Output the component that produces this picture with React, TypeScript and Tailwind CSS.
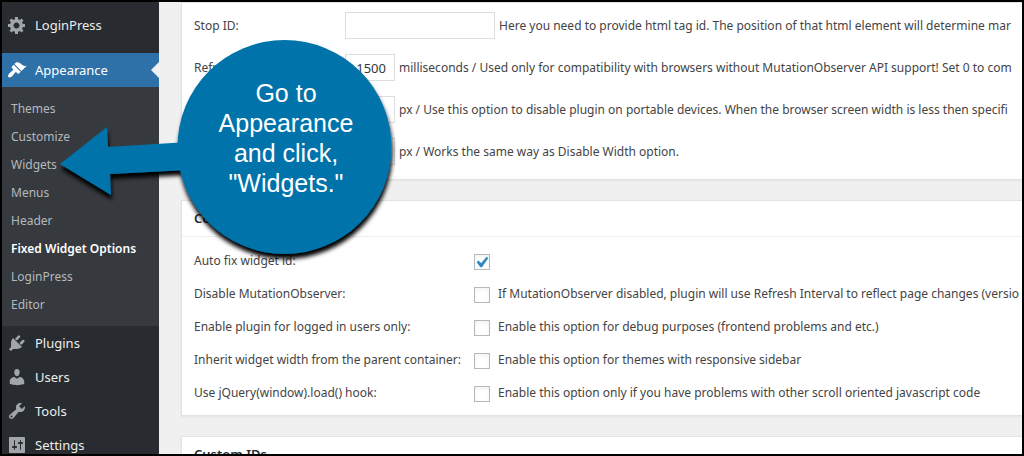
import React, { useState } from 'react';

interface MenuEntry {
  label: string;
  icon: string;
}

interface NumberSetting {
  id: string;
  label: string;
  value: string;
  wide?: boolean;
  hint: string;
}

interface ToggleSetting {
  id: string;
  label: string;
  checked: boolean;
  hint?: string;
}

const GEAR =
  'M18 12h-2.18c-.17.7-.44 1.35-.81 1.93l1.54 1.54-2.1 2.1-1.54-1.54c-.58.36-1.23.63-1.91.79V19H8v-2.18c-.68-.16-1.33-.43-1.91-.79l-1.54 1.54-2.12-2.12 1.54-1.54c-.36-.58-.63-1.23-.79-1.91H1V9.03h2.17c.16-.7.44-1.35.8-1.94L2.43 5.55l2.1-2.1 1.54 1.54c.58-.37 1.24-.64 1.93-.81V2h3v2.18c.68.16 1.33.43 1.91.79l1.54-1.54 2.12 2.12-1.54 1.54c.36.59.64 1.24.8 1.94H18V12zm-8.5 1.5c1.66 0 3-1.34 3-3s-1.34-3-3-3-3 1.34-3 3 1.34 3 3 3z';
const BRUSH =
  'M14.48 11.06L7.41 3.99l1.5-1.5c.5-.56 2.3-.47 3.51.32 1.21.8 1.43 1.28 2.91 2.1 1.18.64 2.45 1.26 4.45.85zm-.71.71L6.7 4.7 4.93 6.47c-.39.39-.39 1.02 0 1.41l1.06 1.06c.39.39.39 1.03 0 1.42-.6.6-1.43 1.11-2.21 1.69-.35.26-.7.53-1.01.84C1.43 14.23.4 16.08 1.4 17.07c.99 1 2.84-.03 4.18-1.36.31-.31.58-.66.85-1.02.57-.78 1.08-1.61 1.69-2.21.39-.39 1.02-.39 1.41 0l1.06 1.06c.39.39 1.02.39 1.41 0z';
const PLUG =
  'M13.11 4.36L9.87 7.6 8 5.73l3.24-3.24c.35-.34 1.05-.2 1.56.32.52.51.66 1.21.31 1.55zm-8 1.77l.91-1.12 9.01 9.01-1.19.84c-.71.71-2.63 1.16-3.82 1.16H6.14L4.9 17.26c-.59.59-1.54.59-2.12 0-.59-.58-.59-1.53 0-2.12l1.24-1.24v-3.88c0-1.13.4-3.19 1.09-3.89zm7.26 3.97l3.24-3.24c.34-.35 1.04-.21 1.55.31.52.51.66 1.21.31 1.55l-3.24 3.25z';
const USER =
  'M10 9.25c-2.27 0-2.73-3.44-2.73-3.44C7 4.02 7.82 2 9.97 2c2.16 0 2.98 2.02 2.71 3.81 0 0-.41 3.44-2.68 3.44zm0 2.57L12.72 10c2.39 0 4.52 2.33 4.52 4.53v2.49s-3.65 1.13-7.24 1.13c-3.65 0-7.24-1.13-7.24-1.13v-2.49c0-2.25 1.94-4.48 4.47-4.48z';
const WRENCH =
  'M16.68 9.77c-1.34 1.34-3.3 1.67-4.95.99l-5.41 6.52c-.99.99-2.59.99-3.58 0s-.99-2.59 0-3.57l6.52-5.42c-.68-1.65-.35-3.61.99-4.95 1.28-1.28 3.12-1.62 4.72-1.06l-2.89 2.89 2.82 2.82 2.86-2.87c.53 1.58.18 3.39-1.08 4.65zM3.81 16.21c.4.39 1.04.39 1.43 0 .4-.4.4-1.04 0-1.43-.39-.4-1.03-.4-1.43 0-.39.39-.39 1.03 0 1.43z';
const SLIDERS =
  'M18 17V3c0-.55-.45-1-1-1H3c-.55 0-1 .45-1 1v14c0 .55.45 1 1 1h14c.55 0 1-.45 1-1zM8 11h1c.55 0 1 .45 1 1s-.45 1-1 1H8v1.5c0 .28-.22.5-.5.5s-.5-.22-.5-.5V13H6c-.55 0-1-.45-1-1s.45-1 1-1h1V5.5c0-.28.22-.5.5-.5s.5.22.5.5V11zm5-2h-1c-.55 0-1-.45-1-1s.45-1 1-1h1V5.5c0-.28.22-.5.5-.5s.5.22.5.5V7h1c.55 0 1 .45 1 1s-.45 1-1 1h-1v5.5c0 .28-.22.5-.5.5s-.5-.22-.5-.5V9z';
const CHECK = 'M14.83 4.89l1.34.94-5.81 8.38H9.02L5.78 9.67l1.34-1.25 2.57 2.4z';

const submenu = ['Themes', 'Customize', 'Widgets', 'Menus', 'Header', 'Fixed Widget Options', 'LoginPress', 'Editor'];

const lowerMenu: MenuEntry[] = [
  { label: 'Plugins', icon: PLUG },
  { label: 'Users', icon: USER },
  { label: 'Tools', icon: WRENCH },
  { label: 'Settings', icon: SLIDERS },
];

const MenuLink: React.FC<MenuEntry & { current?: boolean }> = ({ label, icon, current }) => (
  <a
    href="#"
    className={
      current
        ? 'relative flex h-[34px] items-center gap-2 bg-[#2e70a8] pl-[5px] text-[13px] text-white'
        : 'flex h-[34px] items-center gap-2 pl-[5px] text-[13px] text-[#eeeeee]'
    }
  >
    <svg viewBox="0 0 20 20" className={current ? 'size-5 fill-white' : 'size-5 fill-[#a0a5aa]'}>
      <path d={icon} />
    </svg>
    <span className="pt-px">{label}</span>
    {current && (
      <span className="absolute right-0 border-y-8 border-r-8 border-y-transparent border-r-[#f0f0f0]" />
    )}
  </a>
);

const Sidebar: React.FC = () => (
  <nav className="w-[157px] shrink-0 bg-[#282b30] pt-[6px]">
    <MenuLink label="LoginPress" icon={GEAR} />
    <div className="mt-[11px]">
      <MenuLink label="Appearance" icon={BRUSH} current />
      <ul className="bg-[#363a3f] pt-2 pb-[7px]">
        {submenu.map(item => (
          <li key={item}>
            <a
              href="#"
              className={
                item === 'Fixed Widget Options'
                  ? 'block pl-[9px] text-xs leading-7 font-semibold whitespace-nowrap text-white'
                  : 'block pl-[9px] text-xs leading-7 whitespace-nowrap text-[#b4b9be]'
              }
            >
              {item}
            </a>
          </li>
        ))}
      </ul>
    </div>
    {lowerMenu.map(item => (
      <MenuLink key={item.label} {...item} />
    ))}
  </nav>
);

const Panel: React.FC<{ title?: string; children?: React.ReactNode }> = ({ title, children }) => (
  <section className="border border-r-0 border-[#e2e2e2] bg-white shadow-xs">
    {title && (
      <h2 className="border-b border-[#eeeeee] px-3 text-[13px] leading-[35px] font-semibold text-[#23282d]">{title}</h2>
    )}
    {children}
  </section>
);

const Callout: React.FC = () => (
  <div className="pointer-events-none absolute top-[38px] left-[56px] w-[336px]">
    <svg viewBox="0 0 336 222" className="w-full overflow-visible">
      <defs>
        <filter id="callout-shadow" x="-10%" y="-10%" width="125%" height="125%">
          <feDropShadow dx="1" dy="5" stdDeviation="2" floodColor="#000000" floodOpacity="1" />
        </filter>
      </defs>
      <g fill="#0073aa" filter="url(#callout-shadow)">
        <path d="M2 124L49 87L50 107L130 102V130L52 134L53 155Z" />
        <circle cx="226.5" cy="107" r="107" />
      </g>
    </svg>
    <p className="absolute top-[38px] right-0 w-[216px] text-center font-['Liberation_Sans',Arial,sans-serif] text-[25px] leading-[30px] text-white">
      Go to
      <br />
      Appearance
      <br />
      and click,
      <br />
      "Widgets."
    </p>
  </div>
);

const App: React.FC = () => {
  const [numbers, setNumbers] = useState<NumberSetting[]>([
    {
      id: 'stop-id',
      label: 'Stop ID:',
      value: '',
      wide: true,
      hint: 'Here you need to provide html tag id. The position of that html element will determine mar',
    },
    {
      id: 'refresh-interval',
      label: 'Refresh interval:',
      value: '1500',
      hint: 'milliseconds / Used only for compatibility with browsers without MutationObserver API support! Set 0 to com',
    },
    {
      id: 'disable-width',
      label: 'Disable Width:',
      value: '',
      hint: 'px / Use this option to disable plugin on portable devices. When the browser screen width is less then specifi',
    },
    { id: 'disable-height', label: 'Disable Height:', value: '', hint: 'px / Works the same way as Disable Width option.' },
  ]);

  const [toggles, setToggles] = useState<ToggleSetting[]>([
    { id: 'auto-fix', label: 'Auto fix widget id:', checked: true },
    {
      id: 'disable-mo',
      label: 'Disable MutationObserver:',
      checked: false,
      hint: 'If MutationObserver disabled, plugin will use Refresh Interval to reflect page changes (versio',
    },
    {
      id: 'logged-in',
      label: 'Enable plugin for logged in users only:',
      checked: false,
      hint: 'Enable this option for debug purposes (frontend problems and etc.)',
    },
    {
      id: 'inherit-width',
      label: 'Inherit widget width from the parent container:',
      checked: false,
      hint: 'Enable this option for themes with responsive sidebar',
    },
    {
      id: 'window-load',
      label: 'Use jQuery(window).load() hook:',
      checked: false,
      hint: 'Enable this option only if you have problems with other scroll oriented javascript code',
    },
  ]);

  const changeNumber = (id: string, value: string) => {
    setNumbers(numbers.map(item => (item.id === id ? { ...item, value } : item)));
  };

  const flip = (id: string) => {
    setToggles(toggles.map(item => (item.id === id ? { ...item, checked: !item.checked } : item)));
  };

  return (
    <div className="relative flex h-screen overflow-hidden border-2 border-black bg-[#f0f0f0] font-['Noto_Sans','Open_Sans',sans-serif] text-xs text-[#444444]">
      <Sidebar />
      <main className="flex min-w-0 flex-1 flex-col gap-5 pl-[22px]">
        <Panel>
          <div className="flex flex-col gap-[15px] pt-[9px] pb-[14px] pl-3">
            {numbers.map(item => (
              <div key={item.id} className="flex h-[27px] items-center whitespace-nowrap">
                <label htmlFor={item.id} className="w-[151px] shrink-0">
                  {item.label}
                </label>
                <input
                  id={item.id}
                  type="text"
                  value={item.value}
                  onChange={e => changeNumber(item.id, e.target.value)}
                  className={
                    item.wide
                      ? 'h-[27px] w-[150px] shrink-0 border border-[#dddddd] bg-white px-2 text-[13px] text-[#32373c]'
                      : 'h-[27px] w-[50px] shrink-0 border border-[#dddddd] bg-white pr-2 text-right text-[13px] text-[#32373c]'
                  }
                />
                <span className="pl-1">{item.hint}</span>
              </div>
            ))}
          </div>
        </Panel>
        <Panel title="Compatibility">
          <div className="pt-[7px] pb-[6px] pl-3">
            {toggles.map(item => (
              <div key={item.id} className="flex h-[33px] items-center whitespace-nowrap">
                <label htmlFor={item.id} className="w-[280px] shrink-0">
                  {item.label}
                </label>
                <span className="grid shrink-0 place-items-center pt-[3px]">
                  <input
                    id={item.id}
                    type="checkbox"
                    checked={item.checked}
                    onChange={() => flip(item.id)}
                    className="peer col-start-1 row-start-1 size-4 appearance-none border border-[#b4b9be] bg-white shadow-inner"
                  />
                  <svg
                    viewBox="3 2 15 15"
                    className="pointer-events-none invisible col-start-1 row-start-1 size-4 fill-[#2e84c0] stroke-[#2e84c0] stroke-[0.5] peer-checked:visible"
                  >
                    <path d={CHECK} />
                  </svg>
                </span>
                {item.hint && <span className="pl-2">{item.hint}</span>}
              </div>
            ))}
          </div>
        </Panel>
        <Panel title="Custom IDs" />
      </main>
      <Callout />
    </div>
  );
};

export default App;
